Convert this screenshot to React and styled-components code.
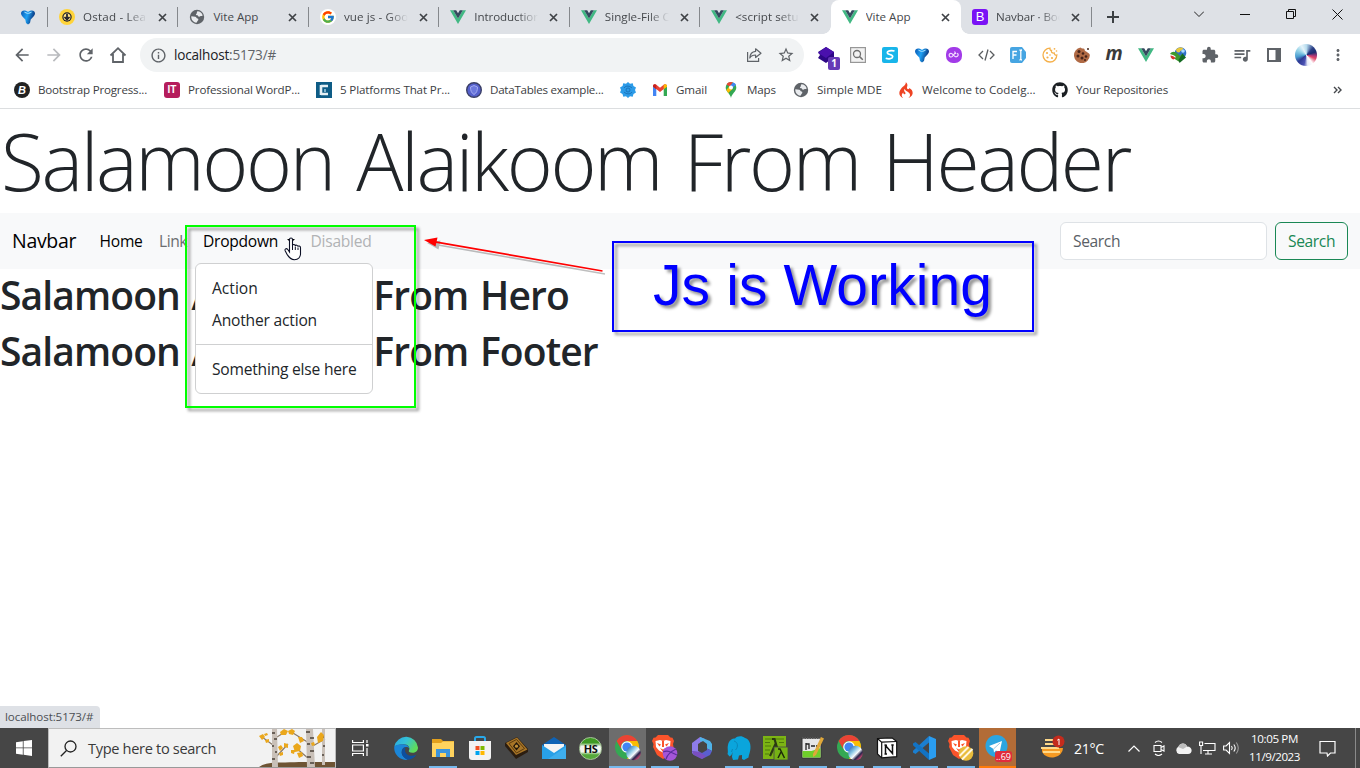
import React from "react";
import styled, { createGlobalStyle, css } from "styled-components";
import { FcGoogle } from "react-icons/fc";
import { FaGithub } from "react-icons/fa";
import { SiCodeigniter } from "react-icons/si";
import { MdArrowBack, MdArrowForward, MdRefresh, MdStarBorder, MdExtension, MdQueueMusic, MdMoreVert, MdInfoOutline } from "react-icons/md";

const Global = createGlobalStyle`
  *, *::before, *::after { box-sizing: border-box; }
  body { margin: 0; width: 1360px; height: 768px; overflow: hidden; background: #fff;
    font-family: "Open Sans", "Noto Sans", sans-serif; color: #212529; }
  svg { display: block; flex: none; }
`;

const Screen = styled.div`
  position: relative; width: 1360px; height: 768px; display: flex; flex-direction: column; overflow: hidden;
`;
const Label = styled.span`
  white-space: nowrap; letter-spacing: ${(p) => p.$ls || 0}px; word-spacing: ${(p) => p.$ws || 0}px;
`;

/* ---------- tab strip ---------- */
const TabStrip = styled.div`
  height: 34px; flex: none; display: flex; background: #dee1e6; font-size: 11.6px; color: #45484c;
`;
const PinnedTab = styled.div`
  width: 48px; display: flex; align-items: center; padding-left: 20px;
  background: linear-gradient(#85888c, #85888c) right 0 top 7px / 1px 20px no-repeat;
`;
const Tab = styled.div`
  width: 130.45px; flex: none; display: flex; align-items: center; padding-left: 11px; position: relative;
  ${(p) => p.$sep && css`background: linear-gradient(#85888c, #85888c) right 0 top 7px / 1px 20px no-repeat;`}
  ${(p) => p.$active && css`
    background: #fff; border-radius: 8px 8px 0 0;
    &::before, &::after { content: ""; position: absolute; bottom: 0; width: 8px; height: 8px; }
    &::before { left: -8px; background: radial-gradient(circle at 0 0, transparent 7.5px, #fff 8px); }
    &::after { right: -8px; background: radial-gradient(circle at 100% 0, transparent 7.5px, #fff 8px); }
  `}
`;
const TabTitle = styled.span`
  width: 64px; margin-left: 8px; overflow: hidden; white-space: nowrap; line-height: 18px;
  ${(p) => p.$fade && css`mask-image: linear-gradient(90deg, #000 44px, transparent 64px);`}
`;
const TabClose = styled.span`margin-left: 11px; display: flex;`;
const WindowButtons = styled.div`
  display: flex; margin-left: auto; height: 28px; align-items: center;
`;
const WindowButton = styled.div`width: 46px; display: flex; justify-content: center;`;
const NewTab = styled.div`width: 43px; display: flex; align-items: center; justify-content: center;`;

/* ---------- toolbar ---------- */
const Toolbar = styled.div`
  height: 41px; flex: none; display: flex; align-items: center; padding: 1px 6px 0; background: #fff; color: #5f6368;
`;
const Slot = styled.div`
  width: 32px; height: 34px; flex: none; display: flex; align-items: center; justify-content: center; position: relative;
  color: ${(p) => p.$c || "inherit"};
`;
const Omnibox = styled.div`
  width: 664px; height: 34px; margin: 0 6px; border-radius: 17px; background: #f1f3f4; display: flex; align-items: center; padding: 0 2px 0 9.5px;
`;
const Url = styled.div`
  flex: 1; margin-left: 7.5px; padding-bottom: 1px; font-size: 13.6px; color: #5f6368;
  b { font-weight: 400; color: #202124; }
`;
const Badge = styled.span`
  position: absolute; left: 18px; top: 19px; width: 12px; height: 13px; border-radius: 2px; background: #6639b6; color: #fff;
  font: 700 10px/13px "Open Sans", sans-serif; text-align: center;
`;
const Avatar = styled.span`
  width: 22px; height: 22px; border-radius: 50%;
  background: conic-gradient(from 0deg at 52% 50%, #b7dcee, #2a3f86 12%, #1c2c70 20%, #b23a78 27%, #e0486a 31%, #fff 40%, #e8ecf8 48%, #4b52b4 54%, #2d3a94 64%, #4b9cd0 72%, #8fd0e6 82%, #e4f3fa 92%, #b7dcee);
`;
const LetterM = styled.span`font: italic 700 19px/20px "Open Sans", sans-serif; color: #3a3a3a; margin-top: -5px;`;

/* ---------- bookmarks ---------- */
const Bookmarks = styled.div`
  height: 34px; flex: none; display: flex; align-items: center; padding: 0 14px 4px; border-bottom: 1px solid #dcdee0; font-size: 11.6px; color: #3c4043;
`;
const Bookmark = styled.div`width: ${(p) => p.$w}px; flex: none; display: flex; align-items: center; gap: 8px;`;
const BookmarkTile = styled.span`
  width: 16px; height: 16px; flex: none; border-radius: ${(p) => p.$r || "0"}; background: ${(p) => p.$bg}; color: #fff;
  font: ${(p) => p.$font || "700 10px/16px"} "Liberation Sans", sans-serif; text-align: center;
`;
const More = styled.span`margin-left: auto; display: flex; padding-right: 4px;`;

/* ---------- page ---------- */
const Page = styled.main`flex: 1; position: relative; background: #fff; font-size: 15.6px;`;
const Display = styled.h1`
  margin: 0 0 8px; height: 96px; font-size: 78.6px; line-height: 104px; font-weight: 300; padding-left: 1px;
`;
const Heading = styled.h1`margin: 0 0 8px; height: 48px; font-size: 39px; line-height: 52px; font-weight: 600;`;
const Navbar = styled.nav`
  height: 56px; background: #f8f9fa; display: flex; align-items: center; padding: 0 12px;
`;
const Brand = styled.a`width: 87.5px; font-size: 19.5px; line-height: 32px; color: #000;`;
const NavLink = styled.a`
  width: ${(p) => p.$w}px; display: flex; align-items: center; line-height: 26px;
  color: ${(p) => (p.$tone === "active" ? "#000" : p.$tone === "disabled" ? "#b1b3b5" : "#6c6e70")};
`;
const Caret = styled.i`margin-left: 8.5px; border: 4.8px solid transparent; border-top-color: #000; border-bottom: 0;`;
const SearchForm = styled.form`margin-left: auto; display: flex; gap: 8px; height: 38px;`;
const SearchInput = styled.div`
  width: 207px; border: 1px solid #dee2e6; border-radius: 6px; background: #fff; padding: 0 12px; line-height: 37px; color: #5a6066;
`;
const SearchButton = styled.div`
  width: 73px; border: 1px solid #198754; border-radius: 6px; color: #198754; line-height: 37px; padding-left: 12px;
`;
const Menu = styled.div`
  position: absolute; left: 195px; top: 154px; width: 178px; height: 131px; padding: 8px 0; background: #fff;
  border: 1px solid #cfd0d1; border-radius: 6px;
`;
const MenuItem = styled.div`height: 32px; padding-left: 16px; line-height: 33px;`;
const MenuDivider = styled.div`height: 1px; margin: 8px 0; background: #cfd0d1;`;
const StatusBubble = styled.div`
  position: absolute; left: 0; bottom: 0; width: 100px; height: 22px; border-radius: 0 4px 0 0; background: #dee1e6;
  color: #4c4f53; font-size: 11.6px; line-height: 22px; padding-left: 5px;
`;

/* ---------- annotations ---------- */
const GreenFrame = styled.div`
  position: absolute; left: 185px; top: 225px; width: 231px; height: 183px; border: 2px solid #00ff00;
  filter: drop-shadow(3px 3px 1.5px rgba(0,0,0,.42));
`;
const BlueFrame = styled.div`
  position: absolute; left: 612px; top: 241px; width: 422px; height: 91px; border: 2px solid #0000ff; padding-left: 39px;
  filter: drop-shadow(3px 3px 1.5px rgba(0,0,0,.42)); color: #0000ff; font: 57px/84px "Liberation Sans", Arial, sans-serif;
`;
const Overlay = styled.svg`position: absolute; left: ${(p) => p.$x}px; top: ${(p) => p.$y}px;`;

/* ---------- taskbar ---------- */
const Taskbar = styled.footer`
  height: 40px; flex: none; display: flex; background: #464646; color: #fff;
`;
const Cell = styled.div`
  width: ${(p) => p.$w || 37}px; flex: none; display: flex; align-items: center; justify-content: center; position: relative;
  background: ${(p) => p.$bg || "none"};
  ${(p) => p.$line && css`&::after { content: ""; position: absolute; bottom: 0; height: 2px; width: ${p.$wide ? 37 : 28}px; background: ${p.$line}; }`}
`;
const SearchBox = styled.div`
  width: 288px; border: 1px solid #bdbdbd; border-bottom-color: #999; background: #f2f2f2; display: flex; align-items: center; color: #3a3a3a; font-size: 14.6px; padding-left: 11px;
`;
const SearchText = styled.span`margin-left: 11px; flex: 1;`;
const Apps = styled.div`display: flex; padding-left: 3px; flex: 1;`;
const Weather = styled.div`display: flex; align-items: center; width: 81px; font-size: 14.2px; gap: 8px;`;
const Clock = styled.div`
  width: 49px; margin-left: 7px; display: flex; flex-direction: column; align-items: center; justify-content: center; font-size: 11.6px; line-height: 18px;
`;
const TrayEnd = styled.div`width: 5px; border-left: 1px solid #8a8a8a;`;

/* ---------- icons ---------- */
const Close = () => (
  <svg width="9" height="9" viewBox="0 0 9 9" stroke="#3f4246" strokeWidth="1.7"><path d="M1 1l7 7M8 1l-7 7" /></svg>
);
const Vue = () => (
  <svg width="16" height="16" viewBox="0 0 16 16"><path d="M0 1.200h3.200L8 9.500l4.800-8.300H16L8 15z" fill="#41b883" /><path d="M3.200 1.200H6.200L8 4.300 9.800 1.200h3L8 9.500z" fill="#35495e" /></svg>
);
const Balloon = () => (
  <svg width="16" height="16" viewBox="0 0 16 16">
    <defs><linearGradient id="bal" x1="0" y1="0" x2="1" y2=".3"><stop offset="0" stopColor="#0b57b0" /><stop offset=".5" stopColor="#1fa2f5" /><stop offset="1" stopColor="#0a347c" /></linearGradient></defs>
    <path d="M1 4.500C1 2 3 1.200 5 1.600c1.200.2 2 .9 3 1.200 1-.3 1.800-1 3-1.200 2-.4 4 .4 4 2.900 0 2-2.500 3.800-4.300 6L10 14l-2 1.500L6 14l-.7-3.500C3.500 8.300 1 6.500 1 4.500z" fill="url(#bal)" />
    <path d="M4 2.800c1.500-.4 2.600.9 4 1.200 1.400-.3 2.500-1.600 4-1.200-.8 1.500-2.500 2-4 2s-3.200-.5-4-2z" fill="#9ddcff" />
  </svg>
);
const Globe = () => (
  <svg width="16" height="16" viewBox="0 0 16 16"><circle cx="8" cy="8" r="7.200" fill="#5f6368" />
    <path d="M8.500 2.200c2.500 0 4.600 1.800 5.200 4.200-1 .8-2 .3-2.500.9-.7.800-2 .5-2.300-.5-.3-.9-1.800-.2-2-1.200-.1-.9 1-.9 1-1.700 0-.700-.2-1.200.6-1.700zM2.300 7.300l4 .5c1 .2 1 1.500 2.200 1.700 1.200.1 1 1.700.2 2.300-.700.5-.4 1.600-1.400 2C4.200 13.300 2 10.600 2.300 7.300z" fill="#e9ebee" /></svg>
);
const Ostad = () => (
  <svg width="16" height="16" viewBox="0 0 16 16"><circle cx="8" cy="8" r="8" fill="#ffd43a" /><circle cx="8" cy="8" r="4.700" fill="#1d1d2a" /><circle cx="8" cy="8" r="3.500" fill="#ffe487" /><path d="M8 5v4M5.500 8L8 10.500 10.500 8" stroke="#1d1d2a" strokeWidth="1.700" fill="none" /></svg>
);
const BootstrapB = () => <BookmarkTile $bg="#7a12f5" $r="3px" $font="400 13px/16px">B</BookmarkTile>;
const GoogleDisc = styled.span`width: 16px; height: 16px; border-radius: 50%; background: #fff; display: flex; align-items: center; justify-content: center;`;
const Home = () => (
  <svg width="18" height="18" viewBox="0 0 18 18" fill="none" stroke="#5f6368" strokeWidth="1.800"><path d="M1.500 9.500L9 2.200l7.500 7.300M4 8v8h10V8" /></svg>
);
const Share = () => (
  <svg width="16" height="16" viewBox="0 0 16 16" fill="none" stroke="#5f6368" strokeWidth="1.200"><path d="M1.600 5v9.400h11V11" /><path d="M9.600 1.800L15 6.200l-5.400 4.300V8C7 8 5 8.800 3.800 11 4 7 6 4.600 9.600 4.300z" strokeLinejoin="round" /></svg>
);
const Cube = () => (
  <svg width="16" height="16" viewBox="0 0 16 16"><path d="M8 0l8 5v5l-8 6-8-5 2-3-2-3z" fill="#2d0785" /><path d="M8 0l8 5-8 6-8-5z" fill="#4a10ad" /></svg>
);
const Magnifier = () => (
  <svg width="16" height="16" viewBox="0 0 16 16" fill="none"><rect x=".6" y=".6" width="14.800" height="14.800" fill="#f2f2f2" stroke="#979797" strokeWidth="1.200" /><circle cx="7" cy="7" r="3.500" stroke="#707070" strokeWidth="1.300" /><path d="M9.600 9.600l3.200 3.200" stroke="#707070" strokeWidth="1.500" /></svg>
);
const SquareS = () => (
  <svg width="16" height="16" viewBox="0 0 16 16"><rect width="16" height="16" rx="2" fill="#18b5ea" /><path d="M12.500 4C9 3 5 4 5.400 6c.4 1.700 5.400 1.500 5.300 3.700-.1 2-4 2.700-7 1.600" fill="none" stroke="#fff" strokeWidth="1.700" /></svg>
);
const PurpleLoop = () => (
  <svg width="16" height="16" viewBox="0 0 16 16"><rect width="16" height="16" rx="7" fill="#a23be8" /><path d="M9.500 6.200C8 6 7 10 5.300 10 2.500 10 2.500 6.300 5 6.300c2 0 2.500 3.500 5 3.500s3-3 1-3.500M8.500 4.500L10 7" fill="none" stroke="#f3dcff" strokeWidth="1.200" /></svg>
);
const CodeTag = () => (
  <svg width="17" height="12" viewBox="0 0 17 12" fill="none" stroke="#5a5d60" strokeWidth="1.300"><path d="M5 2L1 6l4 4M12 2l4 4-4 4M10 .5L7 11.500" /></svg>
);
const FiTag = () => (
  <svg width="16" height="16" viewBox="0 0 16 16"><path d="M2 0h10l4 5v6l-4 5H2a2 2 0 01-2-2V2a2 2 0 012-2z" fill="#46a5e2" /><path d="M3 12V4.500h4M3 8h3.500M9.500 3c1 0 1 .5 1.300 1 .2-.5.300-1 1.200-1M10.800 4v8M9.500 13c1 0 1-.5 1.300-1 .2.500.3 1 1.200 1" fill="none" stroke="#fff" strokeWidth="1.300" /></svg>
);
const CookieLine = () => (
  <svg width="16" height="16" viewBox="0 0 16 16" fill="none" stroke="#f5b04a" strokeWidth="1.300"><path d="M8 1.200A6.900 6.900 0 1014.800 8c-1.500.5-2.500-.5-2.600-2C10 6.300 9 5 9.500 3.500 8.300 3.500 7.800 2.500 8 1.200z" /><g fill="#f5b04a" stroke="none"><circle cx="5" cy="6" r="1.100" /><circle cx="5.500" cy="10.500" r="1.100" /><circle cx="10" cy="11" r="1.100" /><circle cx="8" cy="8" r=".8" /><circle cx="12.500" cy="1.800" r=".9" /><circle cx="14.500" cy="4" r=".8" /></g></svg>
);
const CookieSolid = () => (
  <svg width="16" height="16" viewBox="0 0 16 16"><path d="M6.500.5C8 2 9 1 10.500 2c0 2.500 2 2 3 3.500 1 1 2.500 1 2.300 3A7.900 7.900 0 116.500.5z" fill="#b06a45" /><g fill="#45241a"><circle cx="5" cy="4.500" r="1.500" /><circle cx="9" cy="6.500" r="1.300" /><circle cx="4" cy="9" r="1.500" /><circle cx="8" cy="11" r="1.500" /><circle cx="12" cy="9.500" r="1.300" /><circle cx="11" cy="13" r="1" /><circle cx="14" cy="2" r="1" /></g></svg>
);
const Idm = () => (
  <svg width="17" height="16" viewBox="0 0 17 16"><circle cx="10.500" cy="6" r="5.800" fill="#2f6fc6" /><path d="M6 2.500C8 0 12 0 13 1c0 3-3 2-3 4-2 1-4 0-4-2.500z" fill="#e8c83a" /><circle cx="13" cy="4" r="1.800" fill="#a8d8ff" /><path d="M0 7c2-3 5-3 8 0 1 1 1.500 1 2 2l2.500-2.500V12l-3 3L4 11.500 6 10C4 8 2 7.500 0 7z" fill="#3f9a2c" /><path d="M.5 8.500c2 0 3.500 1 5 2.500l-2 1.500C1.500 12 .5 10.500.5 8.500z" fill="#d8362b" /><path d="M12.500 6.500l3.500 4-6.500 5.500-1-3z" fill="#146a22" /></svg>
);
const SidePanel = () => (
  <svg width="14" height="14" viewBox="0 0 14 14"><rect x="1" y="1" width="12" height="12" fill="none" stroke="#5f6368" strokeWidth="2" /><rect x="8.500" width="5.500" height="14" fill="#5f6368" /></svg>
);
const PlatformMark = () => (
  <svg width="16" height="16" viewBox="0 0 16 16"><rect width="16" height="16" fill="#0e5c86" /><path d="M5 4h7M5 12h7M5 3v10" stroke="#e6f0f5" strokeWidth="2.600" /><path d="M9 7v3" stroke="#7db0cb" strokeWidth="2" /></svg>
);
const Shield = () => (
  <svg width="16" height="16" viewBox="0 0 16 16"><circle cx="8" cy="8" r="7.300" fill="#5560cc" stroke="#3a3f66" strokeWidth="1.400" /><path d="M4.500 5l3.500-1.500L11.500 5c0 4-1 6-3.500 7.500C5.500 11 4.500 9 4.500 5z" fill="#6d79dd" stroke="#a9b1f2" strokeWidth=".9" /></svg>
);
const Atom = () => (
  <svg width="16" height="16" viewBox="0 0 16 16"><path d="M8 0l2 1.700 2.800-.5.600 2.700L16 5.500 15 8l1 2.600-2.500 1.400-.8 2.700-2.700-.5L8 16l-2-1.800-2.700.5-.8-2.700L0 10.600 1 8 0 5.500l2.600-1.600.6-2.700 2.800.5z" fill="#2c9be8" /><circle cx="8" cy="8" r="2" fill="none" stroke="#1a6fb4" strokeWidth=".9" /><path d="M4 6c2-3 6-2 8 0M12 10c-2 3-6 2-8 0" stroke="#1a6fb4" strokeWidth=".9" fill="none" /></svg>
);
const Gmail = () => (
  <svg width="16" height="16" viewBox="0 0 16 16"><path d="M1 14V3.500L4.300 6v8z" fill="#4285f4" /><path d="M11.700 14V6L15 3.500V14z" fill="#34a853" /><path d="M1 4.500C1 2 3 1.800 4 2.600L8 5.700l4-3.100c1-.8 3-.6 3 1.900L8 10z" fill="#ea4335" /><path d="M1 4.300C1 2 3 1.800 4.300 2.900V7.200L1 4.700z" fill="#c5221f" /><path d="M15 4.300c0-2.300-2-2.500-3.300-1.400V7.200L15 4.700z" fill="#fbbc04" /></svg>
);
const Maps = () => (
  <svg width="16" height="16" viewBox="0 0 16 16"><path d="M8 0a5.500 5.500 0 00-5.300 5.500C2.700 10 7 11 8 16c1-5 5.300-6 5.300-10.500A5.500 5.500 0 008 0z" fill="#34a853" /><path d="M8 0a5.500 5.500 0 00-4.500 2.200l3 2.500L10 .4A5 5 0 008 0z" fill="#ea4335" /><path d="M10 .4L6.500 4.700 8 8l5-5.500A5.500 5.500 0 0010 .4z" fill="#4285f4" /><path d="M3.300 8l3.500-4.200L9.500 7l-4.300 4z" fill="#fbbc04" /><circle cx="8" cy="5.500" r="2" fill="#fff" /></svg>
);
const Edge = () => (
  <svg width="24" height="24" viewBox="0 0 24 24">
    <defs><linearGradient id="edg" x1="0" y1="0" x2="1" y2=".5"><stop offset="0" stopColor="#27a6e6" /><stop offset=".5" stopColor="#35c2d6" /><stop offset="1" stopColor="#5fdc5a" /></linearGradient></defs>
    <path d="M.3 10.500A12 12 0 0124 11.500c0 3.500-2.700 5.300-5.500 5.300-3 0-4.300-1.200-3.600-2.300 1.600-2.600-.4-6.300-5.400-6.300-4 0-7.500 1.500-9.200 2.300z" fill="url(#edg)" />
    <path d="M.3 10.500C2 8.800 5.500 8 9.500 8.200c3.500.2 5.500 2.300 5.900 4.300-1-1.300-2.400-1.700-3.700-1.500C7.500 11.600 6.500 17 9 20c1.500 2 3 3 5 3.800A12 12 0 01.3 10.500z" fill="#1b86d8" />
    <path d="M9 12.500C6 17 9 22.500 14 23.800c3.500-.3 6.500-2.300 8.300-5-4 1.900-8.500 1.200-10.500-1.800-1.200-1.800-1-3.800-.2-5.500-1 0-2 .3-2.600 1z" fill="#0d4f9e" />
  </svg>
);
const Folder = () => (
  <svg width="22" height="20" viewBox="0 0 22 20"><path d="M0 1h9l2 2h11v16H0z" fill="#e2a01d" /><path d="M0 5h9l2-1.500h11V19H0z" fill="#ffd35e" /><path d="M4 19v-8h14v8h-4v-4H8v4z" fill="#3b94dc" /></svg>
);
const Store = () => (
  <svg width="24" height="24" viewBox="0 0 24 24"><path d="M7 6V2.500C7 1.500 7.500 1 8.500 1h7c1 0 1.500.5 1.500 1.500V6" fill="none" stroke="#29a9ea" strokeWidth="2" /><path d="M1 5h22v16a3 3 0 01-3 3H4a3 3 0 01-3-3z" fill="#f3f3f3" /><path d="M7.500 10h4v4h-4z" fill="#f25022" /><path d="M12.500 10h4v4h-4z" fill="#7fba00" /><path d="M7.500 15h4v4h-4z" fill="#00a4ef" /><path d="M12.500 15h4v4h-4z" fill="#ffb900" /></svg>
);
const Book = () => (
  <svg width="24" height="22" viewBox="0 0 24 22"><path d="M0 6l12-6 11 12v3l-12 7L0 9z" fill="#2b1d10" /><path d="M1 6l11-5.500 10.500 12L11 18z" fill="#a77527" /><path d="M4 6.500l7.500-4 8 9-8 4.500z" fill="none" stroke="#5b3a0d" strokeWidth="1" /><path d="M11.500 5l3.500 4.300-3.500 4.200L8 9.200z" fill="#20160a" /><circle cx="11.500" cy="9.200" r="1.600" fill="#c18f38" /></svg>
);
const Mail = () => (
  <svg width="24" height="22" viewBox="0 0 24 22"><path d="M0 8L12 0l12 8v14H0z" fill="#0f63b5" /><path d="M2 7h20v9H2z" fill="#f4f4f4" /><path d="M0 8l12 8 12-8v14H0z" fill="#28a0e8" /><path d="M24 22H6l18-12z" fill="#4db8f0" opacity=".6" /></svg>
);
const HsDisc = styled.span`
  width: 23px; height: 23px; border-radius: 50%; background: linear-gradient(#3f9a24 0 22%, #f3f6ef 40% 66%, #55a93a 80%);
  color: #111; font: 700 11px/21px "Open Sans", sans-serif; text-align: center; letter-spacing: -.4px; border: 1px solid #a8c89a;
`;
const Swirl = ({ id }) => (
  <><defs><linearGradient id={id} x1="0" y1="0" x2="1" y2="1"><stop offset="0" stopColor="#1c4a9c" /><stop offset=".35" stopColor="#86c4e4" /><stop offset=".55" stopColor="#f5fafd" /><stop offset=".7" stopColor="#26204a" /><stop offset=".85" stopColor="#d04a72" /><stop offset="1" stopColor="#2a7fb8" /></linearGradient></defs><circle cx="18.500" cy="18" r="7.300" fill={`url(#${id})`} /></>
);
const Chrome = ({ id }) => (
  <svg width="26" height="26" viewBox="0 0 26 26"><circle cx="12" cy="12" r="12" fill="#34a853" /><path d="M22.400 6A12 12 0 0112 24l5.200-9L12 6z" fill="#fbbc04" /><path d="M1.600 6A12 12 0 0122.400 6H12a6 6 0 00-5.200 9z" fill="#ea4335" /><circle cx="12" cy="12" r="5.800" fill="#fff" /><circle cx="12" cy="12" r="4.600" fill="#4285f4" /><Swirl id={id} /></svg>
);
const Brave = ({ kind }) => (
  <svg width="26" height="26" viewBox="0 0 26 26"><path d="M6 0h10l2.500 2.500 2 .3L22 6l-1 3 .5 3-4 8-6.500 4-6-4-4-8 .5-3L0 6l1.500-3.200 2-.3z" fill="#fb542b" /><path d="M3.500 6L8 5l3 1 3-1 4.500 1-.5 6-3 3.500-4 2-4-2L4 12z" fill="#fff" /><path d="M5 8l4 1.500-1.500 2zM17 8l-4 1.500 1.500 2zM8 13l3 1.500 3-1.500-3 4zM10 6h2v6h-2z" fill="#fb542b" />
    {kind === "violet" ? <><circle cx="18" cy="18.500" r="7.300" fill="#a455d8" /><path d="M11 17c5-2 8 0 14 3M14 24c1-4 6-8 10-10" stroke="#5a2d9c" strokeWidth="1.200" fill="none" /></> : <><circle cx="18" cy="18.500" r="7.300" fill="#e9bc3c" /><path d="M11.500 21l9-9M14 24.500L24.500 14" stroke="#fff7e0" strokeWidth="2" /></>}
  </svg>
);
const Office = () => (
  <svg width="22" height="24" viewBox="0 0 22 24"><path d="M1 7l8-6 5 2-5 4v9l-6 3-2-2z" fill="#8d7bea" /><path d="M9 1l10 4 2 3v7l-6-3V8L9 5z" fill="#4fb3e8" /><path d="M1 15l7 1 7-4 6 3-2 4-8 4-8-4z" fill="#5a5fd0" /><path d="M7 8l5-3 4 3v6l-5 3-4-2z" fill="#464646" /><path d="M1 15l2 4 8 4 4-3-7-4z" fill="#7a4fc0" /></svg>
);
const Elephant = () => (
  <svg width="24" height="24" viewBox="0 0 24 24"><path d="M1 9C2 4 5 2.500 8 2.500 10 0 15-.5 18 2c4 1 5.500 5 5.500 9 0 5-1.500 7-2 10.500L17 24l-2-1v-4l-3 .5-1 4-5 .5-1-3 .5-5-1 3-2 1.500L.5 18C1.500 15 0 12.500 1 9z" fill="#0aa5dc" /><path d="M7 5c4 1 4.500 6 1.500 9M5.500 13L4.500 16" stroke="#0a86b8" fill="none" /></svg>
);
const Lambda = () => (
  <svg width="26" height="26" viewBox="0 0 26 26"><path d="M0 1h23v23H0z" fill="#7cb414" /><path d="M2 4h19M2 7.500h5M16 7.500h5M2 11h6M2 15h5M2 19h4" stroke="#4f7a0a" strokeWidth="1" /><path d="M9 4h2.500l5 17M12.500 9L7 21" stroke="#2b3a12" strokeWidth="2.200" fill="none" /><path d="M11 12h14v13H11z" fill="#76b315" stroke="#464646" strokeWidth=".8" /><path d="M15 14h2l4.500 9M18 17l-3 6" stroke="#1d2a0a" strokeWidth="1.500" fill="none" /></svg>
);
const Notepad = () => (
  <svg width="24" height="24" viewBox="0 0 24 24"><path d="M1 2h19v20H1z" fill="#e6e6e6" stroke="#333" /><path d="M1.500 15l9 0 9-3v9.500h-18z" fill="#6fcf2a" /><path d="M1 2h19" stroke="#555" strokeWidth="2" strokeDasharray="1.500 1" /><path d="M5 7v7M5 8h3v5M10 10h4M15 10h2" stroke="#222" fill="none" strokeWidth="1.300" /><path d="M12 18L20 1l3 1.500L15 19l-3 2z" fill="#e0a83a" /></svg>
);
const Notion = () => (
  <svg width="22" height="22" viewBox="0 0 22 22"><path d="M1.500 1.500L16 .8l4.700 3.700v15.200l-15 1.200L1.500 17z" fill="#fff" stroke="#111" strokeWidth="1.200" /><path d="M1.500 1.500l4.200 3.700v15.700M5.700 5.200l15-.7" fill="none" stroke="#111" strokeWidth="1.200" /><path d="M9.500 17V8.500l7 8V8M8.500 8.300h2.500M8.500 17h2.500M15.300 8h2.400" stroke="#111" strokeWidth="1.500" fill="none" /></svg>
);
const VsCode = () => (
  <svg width="24" height="24" viewBox="0 0 24 24"><path d="M17 6.500V0L1 14.800v1.700L3.500 18z" fill="#1b7fd0" /><path d="M17 17.500V24L1 9.200V7.500L3.500 6z" fill="#1273c4" /><path d="M17 0l7 3v18l-7 3z" fill="#2a9df0" /></svg>
);
const Telegram = () => (
  <svg width="26" height="26" viewBox="0 0 26 26"><circle cx="11.500" cy="11" r="11" fill="#2ca5e0" /><path d="M4 11l13-5-2.500 12-3.500-2.600-2 2-.5-3.400z" fill="#fff" /><path d="M8.500 14L15 8" stroke="#9cc8e0" /></svg>
);
const UnreadBadge = styled.span`
  position: absolute; left: 16px; top: 23px; width: 17px; height: 11px; border-radius: 3px; background: #e02c3c; color: #fff; font: 9px/11px "Open Sans", sans-serif; text-align: center;
`;
const Birches = () => (
  <svg width="76" height="38" viewBox="0 0 76 38">
    <path d="M0 38c8-6 24-4 40-5h36v5z" fill="#6e5434" />
    <g stroke="#8a7a6a" strokeWidth="1.200" fill="none"><path d="M14 16L3 8M17 28L29 15M50 30L36 18M50 14L34 4M52 18l14-8M18 8l8-5" /></g>
    <g fill="#c9c0b8"><path d="M13 0h5l1 38h-6zM47 0h7l2 38h-8zM63 0h3v36h-3z" /></g>
    <g stroke="#4a4039" strokeWidth="1.300"><path d="M13 4h3M15 10h3M13 17h2M16 23h2M13 30h3M47 3h4M51 9h4M48 15h3M51 22h4M48 28h4M51 34h4M63 8h2M64 17h2M63 26h2" /></g>
    <g fill="#eaa71c"><path d="M0 7l4-2 2 3-3 3zM5 5l3-1 1 2-3 1zM6 11l4-1 0 3-3 1zM21 3l4-3 4 2-2 4-5 0zM19 18l3-2 2 3-3 3zM25 14l4 1 0 4-4-1zM20 24l4-1 0 3-3 1zM34 17l4-3 4 3-1 5-5 1zM32 21l4 0-1 4-3-1zM38 24l5-1 1 4-4 2zM29 2l4-2 3 2-2 4-4-1zM39 8l4 0 2 4-4 2zM58 8l4-5 3 3-1 6-5 2zM52 14l3-1 1 3-3 1z" /></g>
  </svg>
);

const tabs = [
  { icon: <Ostad />, text: "Ostad - Lea", ls: 0.2, fade: true },
  { icon: <Globe />, text: "Vite App" },
  { icon: <GoogleDisc><FcGoogle size={14} /></GoogleDisc>, text: "vue js - Goo", ls: 0.12, fade: true },
  { icon: <Vue />, text: "Introduction", ls: -0.1, fade: true },
  { icon: <Vue />, text: "Single-File C", ls: 0.05, fade: true },
  { icon: <Vue />, text: "<script setu", ls: 0.05, fade: true },
  { icon: <Vue />, text: "Vite App", active: true },
  { icon: <BootstrapB />, text: "Navbar · Boo", ls: -0.1, fade: true },
];
const bookmarks = [
  { w: 150, icon: <BookmarkTile $bg="#222" $r="50%" $font="italic 700 11px/16px">B</BookmarkTile>, text: "Bootstrap Progress...", ls: -0.188 },
  { w: 152, icon: <BookmarkTile $bg="#b51d5c" $r="3px" $font="700 10px/16px">IT</BookmarkTile>, text: "Professional WordP...", ls: -0.151 },
  { w: 150, icon: <PlatformMark />, text: "5 Platforms That Pr...", ls: -0.134 },
  { w: 154, icon: <Shield />, text: "DataTables example...", ls: -0.25 },
  { w: 32, icon: <Atom /> },
  { w: 71, icon: <Gmail />, text: "Gmail", ls: -0.094 },
  { w: 70, icon: <Maps />, text: "Maps", ls: -0.125 },
  { w: 105, icon: <Globe />, text: "Simple MDE" },
  { w: 154, icon: <SiCodeigniter size={16} color="#ee4323" />, text: "Welcome to CodeIg..." },
  { w: 120, icon: <FaGithub size={16} color="#1b1f23" />, text: "Your Repositories", ls: -0.195 },
];
const extensions = [
  <><Cube /><Badge>1</Badge></>, <Magnifier />, <SquareS />, <Balloon />, <PurpleLoop />, <CodeTag />, <FiTag />, <CookieLine />, <CookieSolid />,
  <LetterM>m</LetterM>, <Vue />, <Idm />, <MdExtension size={18} />, <MdQueueMusic size={20} />, <SidePanel />, <Avatar />, <MdMoreVert size={18} />,
];
const BLUE = "#76b9ed";
const apps = [
  { icon: <Edge /> }, { icon: <Folder />, line: BLUE }, { icon: <Store /> }, { icon: <Book /> }, { icon: <Mail /> }, { icon: <HsDisc>HS</HsDisc> },
  { icon: <Chrome id="c1" />, line: BLUE, bg: "#6d6d6d", wide: true }, { icon: <Brave kind="violet" />, line: BLUE }, { icon: <Office /> },
  { icon: <Elephant />, line: BLUE }, { icon: <Lambda />, line: BLUE }, { icon: <Notepad />, line: BLUE }, { icon: <Chrome id="c2" />, line: BLUE },
  { icon: <Notion />, line: BLUE }, { icon: <VsCode />, line: BLUE }, { icon: <Brave kind="gold" />, line: BLUE },
  { icon: <><Telegram /><UnreadBadge>..69</UnreadBadge></>, line: "#ff7a0a", bg: "#b26c37", wide: true },
];

export default function App() {
  return (
    <Screen>
      <Global />
      <TabStrip>
        <PinnedTab><Balloon /></PinnedTab>
        {tabs.map((t, i) => (
          <Tab key={i} $active={t.active} $sep={i < 5 || i === 7}>
            {t.icon}
            <TabTitle $fade={t.fade}><Label $ls={t.ls}>{t.text}</Label></TabTitle>
            <TabClose><Close /></TabClose>
          </Tab>
        ))}
        <NewTab><svg width="12" height="12" viewBox="0 0 12 12" stroke="#3c4043" strokeWidth="2"><path d="M6 0v12M0 6h12" /></svg></NewTab>
        <WindowButtons>
          <WindowButton><svg width="10" height="6" viewBox="0 0 10 6" fill="none" stroke="#222"><path d="M0 .5l5 5 5-5" /></svg></WindowButton>
          <WindowButton><svg width="10" height="1"><rect width="10" height="1" fill="#111" /></svg></WindowButton>
          <WindowButton><svg width="10" height="10" viewBox="0 0 10 10" fill="none" stroke="#111"><path d="M.5 2.500h7v7h-7zM2.500 2.500v-2h7v7h-2" /></svg></WindowButton>
          <WindowButton><svg width="11" height="11" viewBox="0 0 11 11" stroke="#111"><path d="M.5.5l10 10M10.500.5l-10 10" /></svg></WindowButton>
        </WindowButtons>
      </TabStrip>
      <Toolbar>
        <Slot><MdArrowBack size={20} /></Slot>
        <Slot $c="#b9bbbe"><MdArrowForward size={20} /></Slot>
        <Slot><MdRefresh size={20} /></Slot>
        <Slot><Home /></Slot>
        <Omnibox>
          <MdInfoOutline size={17} />
          <Url><Label $ls={-0.212}><b>localhost</b>:5173/#</Label></Url>
          <Slot><Share /></Slot>
          <Slot><MdStarBorder size={18} /></Slot>
        </Omnibox>
        {extensions.map((e, i) => <Slot key={i}>{e}</Slot>)}
      </Toolbar>
      <Bookmarks>
        {bookmarks.map((b, i) => (
          <Bookmark key={i} $w={b.w}>{b.icon}{b.text && <Label $ls={b.ls}>{b.text}</Label>}</Bookmark>
        ))}
        <More><svg width="9" height="8" viewBox="0 0 9 8" fill="none" stroke="#44474b" strokeWidth="1.400"><path d="M1 1l3 3-3 3M5 1l3 3-3 3" /></svg></More>
      </Bookmarks>
      <Page>
        <Display><Label $ls={-2.4} $ws={4.6}>Salamoon Alaikoom From Header</Label></Display>
        <Navbar>
          <Brand><Label $ls={-0.3}>Navbar</Label></Brand>
          <NavLink $w={59.5} $tone="active"><Label $ls={-0.25}>Home</Label></NavLink>
          <NavLink $w={44}><Label $ls={-0.45}>Link</Label></NavLink>
          <NavLink $w={107.500} $tone="active"><Label $ls={-0.273}>Dropdown</Label><Caret /></NavLink>
          <NavLink $w={70} $tone="disabled"><Label $ls={-0.266}>Disabled</Label></NavLink>
          <SearchForm>
            <SearchInput><Label $ls={-0.38}>Search</Label></SearchInput>
            <SearchButton><Label $ls={-0.38}>Search</Label></SearchButton>
          </SearchForm>
        </Navbar>
        <Heading><Label $ls={-0.9} $ws={2.4}>Salamoon Alaikoom From Hero</Label></Heading>
        <Heading><Label $ls={-0.9} $ws={2.4}>Salamoon Alaikoom From Footer</Label></Heading>
        <Menu>
          <MenuItem><Label>Action</Label></MenuItem>
          <MenuItem><Label $ls={-0.192}>Another action</Label></MenuItem>
          <MenuDivider />
          <MenuItem><Label $ls={-0.22}>Something else here</Label></MenuItem>
        </Menu>
        <StatusBubble><Label $ls={-0.1}>localhost:5173/#</Label></StatusBubble>
      </Page>
      <Taskbar>
        <Cell $w={48}><svg width="16" height="16" viewBox="0 0 16 16" fill="#fff"><path d="M0 2.200l6.800-1v6.300H0zM7.600 1.100L16 0v7.500H7.600zM0 8.300h6.800v6.400L0 13.700zM7.600 8.300H16V16l-8.400-1.200z" /></svg></Cell>
        <SearchBox>
          <svg width="17" height="17" viewBox="0 0 17 17" fill="none" stroke="#222" strokeWidth="1.300"><circle cx="10.500" cy="6.500" r="5.500" /><path d="M6.500 10.500L.8 16.200" /></svg>
          <SearchText><Label $ls={-0.331}>Type here to search</Label></SearchText>
          <Birches />
        </SearchBox>
        <Cell $w={48}><svg width="17" height="16" viewBox="0 0 17 16" fill="none" stroke="#fff" strokeWidth="1.200"><path d="M.6 0v2.500h10.800V0M.6 16v-2.500h10.800V16M.6 5h10.800v6H.6zM15 0v3M15 8v8" /><path d="M14 4h2.500v2.500H14z" fill="#fff" stroke="none" /></svg></Cell>
        <Apps>
          {apps.map((a, i) => <Cell key={i} $line={a.line} $bg={a.bg} $wide={a.wide}>{a.icon}</Cell>)}
        </Apps>
        <Weather>
          <svg width="26" height="26" viewBox="0 0 26 26"><path d="M2 13h21a11 9.500 0 01-21 4z" fill="#f59a23" /><path d="M5 5h8M5 9h10M1 13h18M3 17h17" stroke="#ffd98a" strokeWidth="2" /><circle cx="18.500" cy="6.500" r="6" fill="#c42b1c" /><path d="M17.200 5.300L19 4v6" stroke="#fff" fill="none" /></svg>
          <Label $ls={-0.313}>21°C</Label>
        </Weather>
        <Cell $w={26}><svg width="12" height="7" viewBox="0 0 12 7" fill="none" stroke="#fff" strokeWidth="1.200"><path d="M.5 6.500L6 1l5.500 5.500" /></svg></Cell>
        <Cell $w={24}><svg width="12" height="16" viewBox="0 0 12 16" fill="none" stroke="#fff" strokeWidth="1.100"><path d="M1 5.500h7v6H1zM8 7.500l3-1.500v5L8 9.500M2 2.500Q5.500-.5 9 2.500M2 14Q5.500 17 9 14" /></svg></Cell>
        <Cell $w={24}><svg width="17" height="11" viewBox="0 0 17 11"><path d="M4 11a4 4 0 01-.3-7.500C5-.5 11-.5 12 3.500c6 0 6 7.500 1 7.500z" fill="#f2f2f2" /><path d="M3 4C5-.5 11-.5 12 3.500L8 6z" fill="#bdbdbd" /></svg></Cell>
        <Cell $w={24}><svg width="17" height="14" viewBox="0 0 17 14" fill="none" stroke="#fff" strokeWidth="1.100"><path d="M5.500 2.500h10.500v7H4M9 9.500V13M6 13h7M.6 1h3v3.500h-3zM2 4.500V13" /></svg></Cell>
        <Cell $w={24}><svg width="17" height="14" viewBox="0 0 17 14" fill="none" stroke="#fff" strokeWidth="1.100"><path d="M.6 5h2.500L6.500 1.500v11L3.100 9H.6zM8.500 5q1.500 2 0 4M10.800 3.500q2.800 3.500 0 7" /><path d="M13.300 1.500q4 5.500 0 11" stroke="#999" /></svg></Cell>
        <Clock><Label $ls={-0.373}>10:05 PM</Label><Label $ls={-0.434}>11/9/2023</Label></Clock>
        <Cell $w={56}><svg width="17" height="17" viewBox="0 0 17 17" fill="none" stroke="#fff" strokeWidth="1.200"><path d="M1 1.500h15v11.500h-4.500L8.500 16 8 13H1z" /></svg></Cell>
        <TrayEnd />
      </Taskbar>

      <GreenFrame />
      <BlueFrame><Label $ls={0.1}>Js is Working</Label></BlueFrame>
      <Overlay $x={420} $y={232} width="190" height="48" viewBox="0 0 190 48">
        <g opacity=".25" transform="translate(3 3)"><path d="M15 10L182 39" stroke="#000" strokeWidth="1.600" /><path d="M4 8l13.500-2.500-2 9z" /></g>
        <path d="M12 9.400L182.500 39" stroke="#f00" strokeWidth="1.700" /><path d="M4 8l13.500-2.500-2 9z" fill="#f00" />
      </Overlay>
      <Overlay $x={284} $y={237} width="19" height="24" viewBox="0 0 19 24">
        <path d="M5.500 15V2.500c0-2 3-2 3 0v6c.2-1.500 2.700-1.200 2.800.5.3-1.300 2.600-1 2.700.7.3-1.200 2.500-.8 2.500 1v6c0 3-2 6-6 6-4.500 0-6-3-7.500-5.500L1.300 14c-1-2 1-3.200 2.300-1.700z" fill="#fff" stroke="#0b0f24" strokeWidth="1.100" /><path d="M8.500 8v5M11.300 9.500V13M14 10.500V13" stroke="#0b0f24" />
      </Overlay>
    </Screen>
  );
}
